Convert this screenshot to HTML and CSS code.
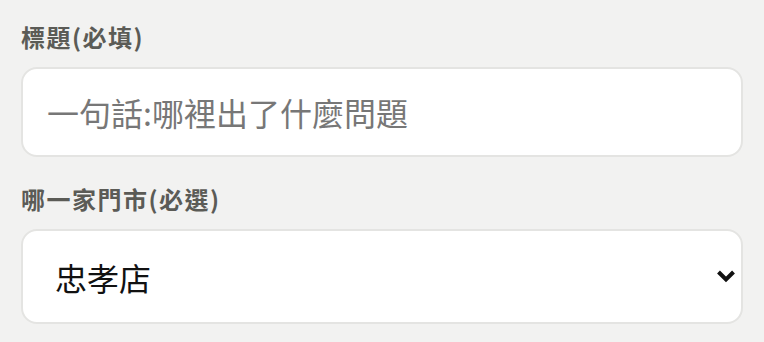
FILE: index.html
```html
<!DOCTYPE html>
<html lang="zh-Hant">
<head>
    <meta charset="UTF-8">
    <meta name="viewport" content="width=device-width, initial-scale=1.0">
    <title>回報問題</title>
    <link rel="stylesheet" href="styles.css">
</head>
<body>
    <form class="report-form">
        <!-- 標題 -->
        <label class="field-label" for="title">標題(必填)</label>
        <input class="field-input" type="text" id="title" name="title" placeholder="一句話:哪裡出了什麼問題" required>

        <!-- 門市 -->
        <label class="field-label" for="store">哪一家門市(必選)</label>
        <div class="select-wrap">
            <select class="field-input field-select" id="store" name="store" required>
                <option value="zhongxiao">忠孝店</option>
                <option value="xinyi">信義店</option>
                <option value="daan">大安店</option>
            </select>
            <svg class="select-arrow" width="20" height="14" viewBox="0 0 20 14">
                <path d="M2.5 3 L10 10.5 L17.5 3" fill="none" stroke="#111" stroke-width="4"/>
            </svg>
        </div>
    </form>
</body>
</html>
```

FILE: styles.css
```css
body {
    margin: 0;
    background: #f2f2f1;
    font-family: "Noto Sans CJK TC", "Noto Sans", sans-serif;
}
.report-form {
    padding: 22px 21px 0 21px;
    display: flex;
    flex-direction: column;
}
.field-label {
    font-size: 24px;
    font-weight: bold;
    color: #5b5b56;
    letter-spacing: 1.5px;
    line-height: 30px;
    margin-bottom: 15px;
}
.field-input {
    box-sizing: border-box;
    width: 100%;
    height: 90px;
    border: 2px solid #e4e4e2;
    border-radius: 16px;
    background: #fff;
    padding: 0 24px;
    font-family: inherit;
    font-size: 32px;
    color: #111;
    margin: 0 0 27px 0;
    outline: none;
}
.field-input::placeholder {
    color: #777;
}
.select-wrap {
    position: relative;
}
.field-select {
    height: 95px;
    padding-left: 32px;
    appearance: none;
    -webkit-appearance: none;
}
.select-arrow {
    position: absolute;
    right: 7px;
    top: 40px;
}
```
